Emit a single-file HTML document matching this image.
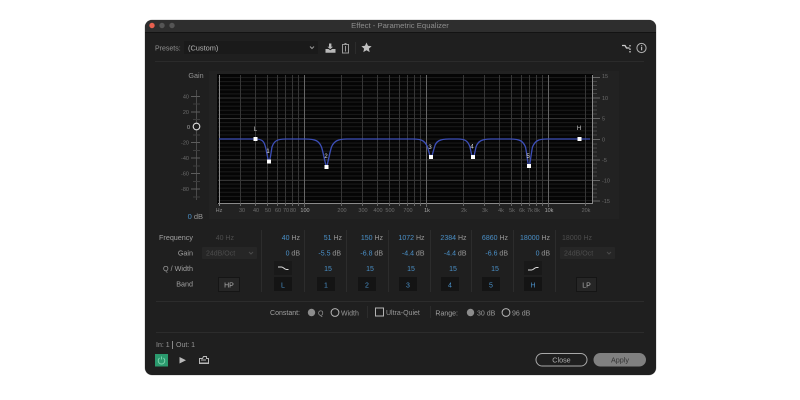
<!DOCTYPE html>
<html><head><meta charset="utf-8"><style>
html,body{margin:0;padding:0;background:#fff;width:800px;height:400px;overflow:hidden}
svg{display:block;filter:blur(.3px)}
text{font-family:"Liberation Sans",sans-serif;font-size:7px;fill:#989898}
.r{text-anchor:end}.m{text-anchor:middle}
.b{fill:#4a90c8}.d{fill:#4a4a4a}.g{fill:#6c6c6c;font-size:5.5px}
.lab{fill:#a0a0a0;font-size:7.2px}
</style></head><body>
<svg width="800" height="400" viewBox="0 0 800 400" xmlns="http://www.w3.org/2000/svg">
<defs>
<pattern id="h" x="218" y="77" width="10" height="4.1" patternUnits="userSpaceOnUse"><rect width="10" height="1" y="0" fill="#1b1b1b"/></pattern>
</defs>
<rect x="144.500" y="19.500" width="512" height="356" rx="8" fill="#c8c8c8"/>
<rect x="145" y="20" width="511" height="355" rx="7" fill="#1f1f1f"/>
<path d="M145 32V27a7 7 0 0 1 7-7H649a7 7 0 0 1 7 7V32Z" fill="#2e2e2e"/>
<rect x="145" y="32" width="511" height="1" fill="#131313"/>
<circle cx="152" cy="25.500" r="2.700" fill="#e8604f"/><circle cx="162" cy="25.500" r="2.700" fill="#555"/><circle cx="172" cy="25.500" r="2.700" fill="#555"/>
<text x="400" y="28" class="m" style="font-size:7.700px;fill:#8c8c8c">Effect - Parametric Equalizer</text>

<!-- presets -->
<text x="155" y="50.500" style="fill:#929292">Presets:</text>
<rect x="184" y="41" width="134" height="13" fill="#1a1a1a"/>
<text x="188" y="50.500" style="font-size:7.400px;fill:#b4b4b4">(Custom)</text>
<path d="M310 46.500l2 2 2-2" stroke="#999" fill="none" stroke-width="1"/>
<path d="M329 43.500h2.400v3.200h1.600l-2.800 2.400-2.800-2.400h1.600z M325.500 49h3l1.800 1.200 1.800-1.200h3.400v3.800h-10z" fill="#b8b8b8"/>
<path d="M342.500 44.500h6v8.500h-6z" fill="none" stroke="#999" stroke-width="1"/><path d="M344.500 43.500h2M345.500 46v5.500" stroke="#999" stroke-width="1" fill="none"/>
<rect x="355" y="42" width="1" height="12" fill="#2c2c2c"/>
<path d="M366.500 42.500l1.500 3.300 3.600.4-2.700 2.400.8 3.500-3.200-1.800-3.200 1.800.8-3.500-2.700-2.400 3.600-.4z" fill="#c0c0c0"/>
<path d="M622 45.500h3l1.500 2.500h3M630 45v1.500M630 48.500v1.500M630 51v1.500" stroke="#ccc" stroke-width="1.300" fill="none"/>
<circle cx="641.500" cy="48" r="4.600" fill="none" stroke="#b4b4b4" stroke-width="1"/><rect x="641" y="47" width="1.200" height="3.300" fill="#b4b4b4"/><rect x="641" y="45.200" width="1.200" height="1.100" fill="#b4b4b4"/>
<rect x="155" y="61" width="489" height="1" fill="#2b2b2b"/>

<!-- graph frame -->
<rect x="209" y="71" width="410" height="148" fill="#222"/>
<rect x="217" y="74" width="376" height="130" fill="#050505"/>
<rect x="218" y="77" width="375" height="126" fill="url(#h)"/>
<g fill="#343434">
<rect x="218" y="97.500" width="375" height="1"/><rect x="218" y="118" width="375" height="1"/><rect x="218" y="159.500" width="375" height="1"/><rect x="218" y="180" width="375" height="1"/>
</g>
<g stroke="#363636" stroke-width="1">
<path d="M240.500 75V204M255.500 75V204M267.500 75V204M277.500 75V204M285.500 75V204M292.500 75V204M298.500 75V204M341.500 75V204M362.500 75V204M377.500 75V204M389.500 75V204M399.500 75V204M407.500 75V204M414.500 75V204M420.500 75V204M463.500 75V204M484.500 75V204M499.500 75V204M511.500 75V204M521.500 75V204M529.500 75V204M536.500 75V204M542.500 75V204M585.500 75V204"/>
</g>
<path d="M304.500 75V204M426.500 75V204M548.500 75V204" stroke="#666" stroke-width="1"/>
<path d="M219.500 75V206M592.500 75V204M218 203.500H593" stroke="#8a8a8a" stroke-width="1" fill="none"/>
<path d="M240.500 203v3M255.500 203v3M267.500 203v3M277.500 203v3M285.500 203v3M292.500 203v3M298.500 203v3M304.500 203v4M341.500 203v3M362.500 203v3M377.500 203v3M389.500 203v3M399.500 203v3M407.500 203v3M414.500 203v3M420.500 203v3M426.500 203v4M463.500 203v3M484.500 203v3M499.500 203v3M511.500 203v3M521.500 203v3M529.500 203v3M536.500 203v3M542.500 203v3M548.500 203v4M585.500 203v3" stroke="#666" stroke-width="1"/>
<g>
<text x="219" y="212" class="g m" style="fill:#888">Hz</text><text x="242" y="212" class="g m">30</text><text x="256" y="212" class="g m">40</text><text x="268" y="212" class="g m">50</text><text x="278" y="212" class="g m">60</text><text x="286" y="212" class="g m">70</text><text x="293" y="212" class="g m">80</text><text x="305" y="212" class="g m" style="fill:#aaa">100</text><text x="342" y="212" class="g m">200</text><text x="363" y="212" class="g m">300</text><text x="378" y="212" class="g m">400</text><text x="390" y="212" class="g m">500</text><text x="408" y="212" class="g m">700</text><text x="427" y="212" class="g m" style="fill:#aaa">1k</text><text x="464" y="212" class="g m">2k</text><text x="485" y="212" class="g m">3k</text><text x="501" y="212" class="g m">4k</text><text x="512" y="212" class="g m">5k</text><text x="522" y="212" class="g m">6k</text><text x="530" y="212" class="g m">7k</text><text x="537" y="212" class="g m">8k</text><text x="549" y="212" class="g m" style="fill:#aaa">10k</text><text x="586" y="212" class="g m">20k</text>
</g>
<!-- right scale -->
<path d="M593 77.500h7M593 98h7M593 118.500h7M593 139.500h7M593 160h7M593 180.500h7M593 201h7" stroke="#666" stroke-width="1"/>
<path d="M593 81.500h4M593 85.500h4M593 89.500h4M593 93.500h4M593 102h4M593 106h4M593 110h4M593 114h4M593 123h4M593 127h4M593 131h4M593 135h4M593 144h4M593 148h4M593 152h4M593 156h4M593 164h4M593 168h4M593 172h4M593 176h4M593 185h4M593 189h4M593 193h4M593 197h4" stroke="#454545" stroke-width="1"/>
<text x="602" y="78" class="g">15</text><text x="602" y="100" class="g">10</text><text x="602" y="120.500" class="g">5</text><text x="602" y="141.500" class="g">0</text><text x="602" y="162" class="g">-5</text><text x="602" y="182.500" class="g">-10</text><text x="602" y="203" class="g">-15</text>

<!-- gain slider -->
<text x="196" y="78" class="m" style="font-size:7.200px;fill:#929292">Gain</text>
<path d="M196.500 90V200" stroke="#4a4a4a" stroke-width="1"/>
<path d="M191 96.500h9M191 112h9M191 142.500h9M191 158h9M191 173.500h9M191 189h9" stroke="#5c5c5c" stroke-width="1"/>
<path d="M193 104h7M193 119.500h7M193 135h7M193 150.500h7M193 166h7M193 181.500h7M193 197h7" stroke="#3e3e3e" stroke-width="1"/>
<text x="189" y="98.500" class="r g">40</text><text x="189" y="114" class="r g">20</text><text x="190" y="129" class="r g" style="fill:#aaa">0</text><text x="189" y="144.500" class="r g">-20</text><text x="189" y="160" class="r g">-40</text><text x="189" y="175.500" class="r g">-60</text><text x="189" y="191" class="r g">-80</text>
<circle cx="196.500" cy="126.500" r="3.300" fill="#1f1f1f" stroke="#ddd" stroke-width="1.100"/>
<text x="203" y="219" class="r" style="font-size:7.500px"><tspan class="b">0</tspan> dB</text>

<!-- curve -->
<path d="M219 139H255C262 139 264 141 265.500 147C267 153 268 161 269 161C270 161 271 153 272 147C274 141 277 139 286 139H305C316 139 319 141 321.500 147C323.500 153 325.500 166 326.500 166C327.500 166 329.500 153 331.500 147C334 141 338 139 347 139H413C422 139 425 141 427.500 147C429 152 430 157 431 157C432 157 433 152 434.500 147C436 141 440 139 449 139H458C465 139 468 141 470 147C471 152 472 157 473 157C474 157 475 152 476 147C478 141 482 139 491 139H510C520 139 523 141 525.500 147C527 154 528 166 529 166C530 166 531 154 532.500 147C535 141 538 139 547 139H590" fill="none" stroke="#3d4fb8" stroke-width="1.300"/>
<g fill="#fff">
<rect x="253.500" y="137" width="4" height="4"/><rect x="267" y="159.500" width="4" height="4"/><rect x="324.500" y="165" width="4" height="4"/><rect x="429" y="155" width="4" height="4"/><rect x="471" y="155" width="4" height="4"/><rect x="527" y="164" width="4" height="4"/><rect x="577.500" y="137" width="4" height="4"/>
</g>
<g>
<text x="255.500" y="131" class="m" style="font-size:6px;fill:#ccc">L</text><text x="268" y="153" class="m" style="font-size:6px;fill:#ddd">1</text><text x="326" y="158" class="m" style="font-size:6px;fill:#ddd">2</text><text x="430" y="149" class="m" style="font-size:6px;fill:#ddd">3</text><text x="472" y="148.500" class="m" style="font-size:6px;fill:#ddd">4</text><text x="528" y="158" class="m" style="font-size:6px;fill:#ddd">5</text><text x="579" y="130" class="m" style="font-size:6px;fill:#ccc">H</text>
</g>

<!-- table labels -->
<text x="193" y="240" class="r lab">Frequency</text><text x="193" y="255.500" class="r lab">Gain</text><text x="193" y="271" class="r lab">Q / Width</text><text x="193" y="286.500" class="r lab">Band</text>
<text x="234" y="240" class="r" style="fill:#4d4d4d">40 Hz</text>
<rect x="202" y="247" width="55" height="12" rx="1" fill="#262626"/><text x="206" y="255.500" style="fill:#4d4d4d">24dB/Oct</text><path d="M249 252l2 2 2-2" stroke="#4a4a4a" fill="none"/>
<!-- separators -->
<path d="M261.500 230V292M304.500 230V292M346.500 230V292M388.500 230V292M430.500 230V292M471.500 230V292M513.500 230V292M555.500 230V292" stroke="#2c2c2c" stroke-width="1"/>
<!-- values -->
<text x="300" y="240" class="r"><tspan class="b">40</tspan> Hz</text><text x="342" y="240" class="r"><tspan class="b">51</tspan> Hz</text><text x="383" y="240" class="r"><tspan class="b">150</tspan> Hz</text><text x="424.500" y="240" class="r"><tspan class="b">1072</tspan> Hz</text><text x="466.500" y="240" class="r"><tspan class="b">2384</tspan> Hz</text><text x="508" y="240" class="r"><tspan class="b">6860</tspan> Hz</text><text x="550" y="240" class="r"><tspan class="b">18000</tspan> Hz</text><text x="592" y="240" class="r" style="fill:#4d4d4d">18000 Hz</text>
<text x="300" y="255.500" class="r"><tspan class="b">0</tspan> dB</text><text x="341" y="255.500" class="r"><tspan class="b">-5.5</tspan> dB</text><text x="383" y="255.500" class="r"><tspan class="b">-6.8</tspan> dB</text><text x="424.500" y="255.500" class="r"><tspan class="b">-4.4</tspan> dB</text><text x="466.500" y="255.500" class="r"><tspan class="b">-4.4</tspan> dB</text><text x="508" y="255.500" class="r"><tspan class="b">-6.6</tspan> dB</text><text x="550" y="255.500" class="r"><tspan class="b">0</tspan> dB</text>
<rect x="560" y="247" width="55" height="12" rx="1" fill="#262626"/><text x="564" y="255.500" style="fill:#4d4d4d">24dB/Oct</text><path d="M607 252l2 2 2-2" stroke="#4a4a4a" fill="none"/>
<text x="328" y="271" class="m b">15</text><text x="370" y="271" class="m b">15</text><text x="411" y="271" class="m b">15</text><text x="453" y="271" class="m b">15</text><text x="495" y="271" class="m b">15</text>
<!-- shelf buttons -->
<rect x="274" y="261" width="18" height="14" fill="#191919"/><path d="M278 267h3.500c2 0 3 2.500 5 2.500h2" stroke="#ddd" stroke-width="1.100" fill="none"/>
<rect x="524" y="261" width="18" height="14" fill="#191919"/><path d="M528 270h3.500c2 0 3-2.500 5-2.500h2" stroke="#ddd" stroke-width="1.100" fill="none"/>
<!-- band buttons -->
<g fill="#141414">
<rect x="274" y="277" width="18" height="14"/><rect x="317" y="277" width="18" height="14"/><rect x="358" y="277" width="18" height="14"/><rect x="399" y="277" width="18" height="14"/><rect x="441" y="277" width="18" height="14"/><rect x="482" y="277" width="18" height="14"/><rect x="524" y="277" width="18" height="14"/>
</g>
<rect x="218.500" y="277.500" width="21" height="14" fill="#262626" stroke="#151515"/><rect x="576.500" y="277.500" width="20" height="14" fill="#262626" stroke="#151515"/>
<text x="229" y="287.500" class="m" style="fill:#b0b0b0">HP</text><text x="586.500" y="287.500" class="m" style="fill:#b0b0b0">LP</text>
<text x="283" y="287.500" class="m b">L</text><text x="326" y="287.500" class="m b">1</text><text x="367" y="287.500" class="m b">2</text><text x="408" y="287.500" class="m b">3</text><text x="450" y="287.500" class="m b">4</text><text x="491" y="287.500" class="m b">5</text><text x="533" y="287.500" class="m b">H</text>
<rect x="156" y="301" width="488" height="1" fill="#2c2c2c"/>

<!-- constant row -->
<text x="300" y="315" class="r" style="fill:#a0a0a0">Constant:</text>
<circle cx="311.500" cy="312.500" r="3.700" fill="#8c8c8c"/><text x="318" y="315.500">Q</text>
<circle cx="335" cy="312.500" r="3.900" fill="none" stroke="#b4b4b4" stroke-width="1"/><text x="341" y="315.500">Width</text>
<rect x="367" y="306" width="1" height="12" fill="#2c2c2c"/>
<rect x="375.500" y="308" width="8" height="8" fill="none" stroke="#b4b4b4" stroke-width="1"/><text x="386" y="315">Ultra-Quiet</text>
<rect x="430" y="306" width="1" height="12" fill="#2c2c2c"/>
<text x="458" y="315.500" class="r" style="fill:#a0a0a0">Range:</text>
<circle cx="470.500" cy="312.500" r="3.700" fill="#8c8c8c"/><text x="477" y="315.500">30 dB</text>
<circle cx="506" cy="312.500" r="3.900" fill="none" stroke="#b4b4b4" stroke-width="1"/><text x="512" y="315.500">96 dB</text>
<rect x="156" y="332" width="488" height="1" fill="#2c2c2c"/>

<!-- bottom -->
<text x="156" y="347">In: 1</text><rect x="172" y="341" width="1" height="8" fill="#888"/><text x="176" y="347">Out: 1</text>
<rect x="155" y="354" width="13" height="12.500" fill="#2b9a6e"/>
<path d="M159.600 358a3.300 3.300 0 1 0 3.800 0M161.500 356.500v3" stroke="#7ed4ae" stroke-width=".9" fill="none"/>
<path d="M179.500 357v6.500l6.500-3.200z" fill="#b8b8b8"/>
<path d="M199.500 358.500h3l1-2h3v2h2v5h-9z" fill="none" stroke="#b8b8b8" stroke-width="1"/><rect x="199" y="362.500" width="10" height="1.500" fill="#b8b8b8"/><path d="M201 360h5" stroke="#b8b8b8" stroke-width="1"/>
<rect x="536" y="353.500" width="51" height="12.500" rx="6.250" fill="#1f1f1f" stroke="#a8a8a8" stroke-width="1"/>
<text x="561.500" y="362.500" class="m" style="font-size:7.200px;fill:#b0b0b0">Close</text>
<rect x="593.500" y="353" width="52.500" height="13.500" rx="6.750" fill="#808080"/>
<text x="620" y="362.500" class="m" style="font-size:7.200px;fill:#333">Apply</text>
</svg>
</body></html>
